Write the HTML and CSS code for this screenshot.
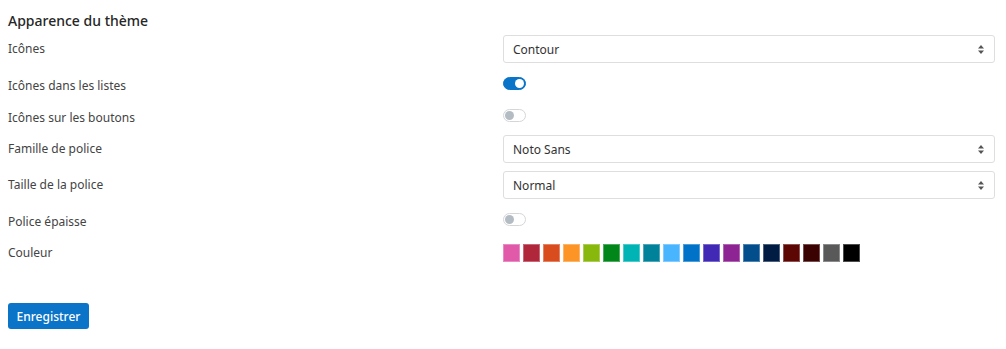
FILE: index.html
```html
<!DOCTYPE html>
<html lang="fr">
<head>
<meta charset="utf-8">
<link rel="stylesheet" href="styles.css">
</head>
<body>
<div class="page">
  <h2 class="title">Apparence du thème</h2>
  <div class="form">
    <div class="row row-select">
      <div class="label">Icônes</div>
      <div class="control"><div class="select"><span>Contour</span><svg class="arrows" width="6" height="9" viewBox="0 0 6 9"><path d="M3 0L6 3.5H0Z M3 9L0 5.5H6Z" fill="#555"/></svg></div></div>
    </div>
    <div class="row row-toggle">
      <div class="label">Icônes dans les listes</div>
      <div class="control"><span class="toggle on"><span class="knob"></span></span></div>
    </div>
    <div class="row row-toggle">
      <div class="label">Icônes sur les boutons</div>
      <div class="control"><span class="toggle"><span class="knob"></span></span></div>
    </div>
    <div class="row row-select">
      <div class="label">Famille de police</div>
      <div class="control"><div class="select"><span>Noto Sans</span><svg class="arrows" width="6" height="9" viewBox="0 0 6 9"><path d="M3 0L6 3.5H0Z M3 9L0 5.5H6Z" fill="#555"/></svg></div></div>
    </div>
    <div class="row row-select">
      <div class="label">Taille de la police</div>
      <div class="control"><div class="select"><span>Normal</span><svg class="arrows" width="6" height="9" viewBox="0 0 6 9"><path d="M3 0L6 3.5H0Z M3 9L0 5.5H6Z" fill="#555"/></svg></div></div>
    </div>
    <div class="row row-toggle">
      <div class="label">Police épaisse</div>
      <div class="control"><span class="toggle"><span class="knob"></span></span></div>
    </div>
    <div class="row row-select">
      <div class="label">Couleur</div>
      <div class="control swatches">
        <span class="sw c1"></span><span class="sw c2"></span><span class="sw c3"></span><span class="sw c4"></span><span class="sw c5"></span><span class="sw c6"></span><span class="sw c7"></span><span class="sw c8"></span><span class="sw c9"></span><span class="sw c10"></span><span class="sw c11"></span><span class="sw c12"></span><span class="sw c13"></span><span class="sw c14"></span><span class="sw c15"></span><span class="sw c16"></span><span class="sw c17"></span><span class="sw c18"></span>
      </div>
    </div>
  </div>
  <button class="btn">Enregistrer</button>
</div>
</body>
</html>
```
FILE: styles.css
```css
html, body {
  margin: 0;
  padding: 0;
  background: #fff;
}
body {
  font-family: "Noto Sans", "Open Sans", sans-serif;
  color: #444;
  font-size: 12px;
}
.page {
  padding: 11px 11px 0 8px;
}
.title {
  margin: 0 0 4px;
  font-size: 14px;
  line-height: 20px;
  font-weight: 500;
  color: #262626;
}
.form {
  display: flex;
  flex-direction: column;
  gap: 8px;
}
.row {
  display: grid;
  grid-template-columns: 495px 1fr;
  align-items: center;
}
.row-select { height: 28px; }
.row-toggle { height: 24px; }
.label {
  line-height: 18px;
  color: #444;
}
.row-toggle .label {
  padding-top: 5px;
}
.control {
  display: flex;
  align-items: center;
}
.select {
  flex: 1;
  height: 28px;
  box-sizing: border-box;
  border: 1px solid #dedede;
  border-radius: 3px;
  display: flex;
  align-items: center;
  justify-content: space-between;
  padding: 0 10px 0 9px;
  color: #333;
}
.toggle {
  position: relative;
  width: 23px;
  height: 13px;
  box-sizing: border-box;
  border-radius: 7px;
  border: 1px solid #d6d6d6;
  background: #fff;
  display: inline-block;
}
.toggle .knob {
  position: absolute;
  top: 1px;
  left: 1px;
  width: 9px;
  height: 9px;
  border-radius: 50%;
  background: #b4bcc3;
}
.toggle.on {
  background: #0a74c9;
  border-color: #0a74c9;
}
.toggle.on .knob {
  left: 11px;
  background: #fff;
}
.swatches {
  gap: 3px;
}
.sw {
  width: 17px;
  height: 18px;
  box-sizing: border-box;
  box-shadow: inset 0 0 0 1px rgba(255,255,255,0.3);
}
.c1 { background: #e05aa9; }
.c2 { background: #b0263a; }
.c3 { background: #d84c1e; }
.c4 { background: #fd9426; }
.c5 { background: #88b80c; }
.c6 { background: #01861a; }
.c7 { background: #00b3b5; }
.c8 { background: #00829a; }
.c9 { background: #4ab5ff; }
.c10 { background: #0073c9; }
.c11 { background: #4129b6; }
.c12 { background: #8e2393; }
.c13 { background: #024d8b; }
.c14 { background: #001c42; }
.c15 { background: #5c0703; }
.c16 { background: #3a0201; }
.c17 { background: #595959; }
.c18 { background: #000000; }
.btn {
  margin-top: 36px;
  width: 81px;
  height: 26px;
  border: none;
  border-radius: 3px;
  background: #0a74c9;
  color: #fff;
  font-family: "Noto Sans", "Open Sans", sans-serif;
  font-size: 12px;
  font-weight: 500;
  padding: 0;
  cursor: pointer;
}
```
